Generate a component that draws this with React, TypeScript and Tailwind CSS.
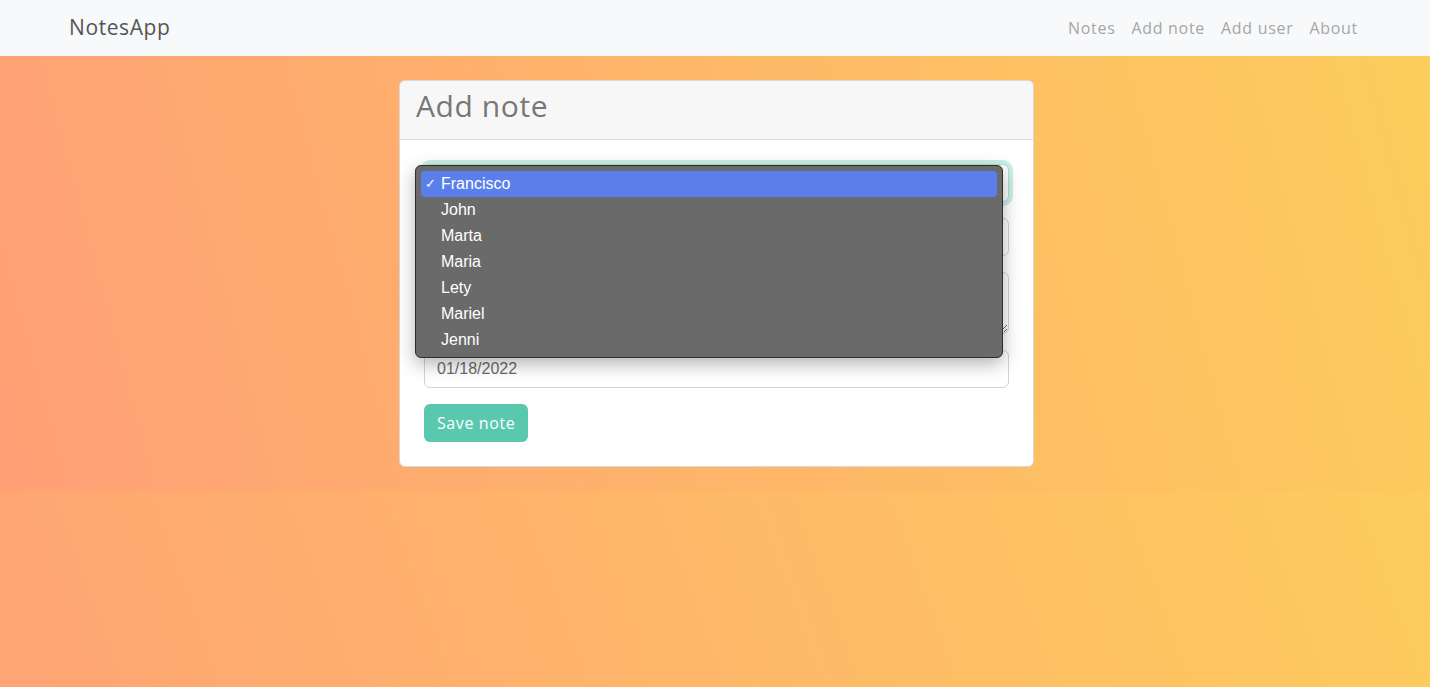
import React from "react";

const names = ["Francisco", "John", "Marta", "Maria", "Lety", "Mariel", "Jenni"];

export default function App() {
  const font = { fontFamily: '"Open Sans", "DejaVu Sans", sans-serif' } as React.CSSProperties;
  return (
    <div className="min-h-[687px] bg-linear-[70deg] from-[#ffa474] to-[#fdd15a]" style={font}>
      <nav className="h-14 bg-[#f8f9fa] flex items-center">
        <div className="w-[1320px] mx-auto px-3 flex items-center justify-between">
          <span className="text-[21px] text-[#555] pl-[2px] tracking-[0.6px]">NotesApp</span>
          <div className="flex items-center text-[16px] text-[#a6a6a6] pr-[5px] tracking-[0.7px]">
            <a className="px-2">Notes</a>
            <a className="px-2">Add note</a>
            <a className="px-2">Add user</a>
            <a className="pl-2">About</a>
          </div>
        </div>
      </nav>
      <section className="bg-linear-[75deg] from-[#ff9f76] to-[#fdcd5c] py-6 flex justify-center pl-[3px]">
        <div className="w-[635px] bg-white rounded-[6px] border border-[#d9d9d9]">
          <div className="h-[59px] bg-[#f7f7f7] border-b border-[#dcdcdc] rounded-t-[6px] flex items-start pt-[5px] px-4">
            <h1 className="text-[30px] text-[#777] font-medium leading-[40px] tracking-[0.6px]">Add note</h1>
          </div>
          <div className="p-6 pb-6 relative">
            <div className="h-[38px] rounded-[6px] border border-[#a9e2d4] ring-4 ring-[#cdeee5] mb-4 bg-white"></div>
            <input className="block w-full h-[38px] rounded-[6px] border border-[#ced4da] mb-4 px-3 outline-none" />
            <textarea className="block w-full h-[62px] rounded-[6px] border border-[#ced4da] mb-4 px-3 outline-none resize-y"></textarea>
            <div className="h-[38px] rounded-[6px] border border-[#ced4da] mb-4 px-3 flex items-center text-[16px] text-[#6c6c6c]" style={{ fontFamily: '"Liberation Sans", Arial, sans-serif' }}>
              01/18/2022
            </div>
            <button className="h-[38px] px-[13px] rounded-[6px] bg-[#59c8ae] text-white text-[16px] tracking-[0.6px]">Save note</button>

            <div
              className="absolute left-[15px] top-[25px] w-[588px] h-[193px] bg-[#6b6a6a] border border-[#2e2e2e] rounded-[6px] shadow-[0_6px_18px_rgba(0,0,0,0.3)] px-[5px] py-[5px]"
              style={{ fontFamily: '"Liberation Sans", Arial, sans-serif' }}
            >
              {names.map((n, i) => (
                <div
                  key={n}
                  className={
                    "h-[26px] flex items-center rounded-[4px] text-white text-[16px] " +
                    (i === 0 ? "bg-[#5a7fea]" : "")
                  }
                >
                  <span className="w-[20px] pl-[4px] text-[13px]">{i === 0 ? "✓" : ""}</span>
                  <span>{n}</span>
                </div>
              ))}
            </div>
          </div>
        </div>
      </section>
    </div>
  );
}
